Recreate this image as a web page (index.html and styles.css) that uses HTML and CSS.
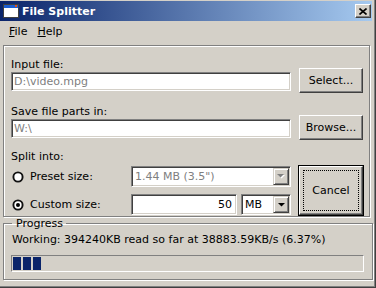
FILE: index.html
```html
<!DOCTYPE html>
<html lang="en">
<head>
    <meta charset="UTF-8">
    <title>File Splitter</title>
    <link rel="stylesheet" href="styles.css">
</head>
<body>
    <div class="window">
        <div class="titlebar">
            <svg class="app-icon" width="16" height="14" viewBox="0 0 16 14">
                <rect x="0.5" y="0.5" width="15" height="13" fill="#fff" stroke="#404040"/>
                <rect x="1" y="1" width="14" height="3" fill="#1c5ed0"/>
                <rect x="12" y="1" width="2" height="2" fill="#e05020"/>
            </svg>
            <span class="title">File Splitter</span>
            <div class="close">
                <svg width="8" height="7" viewBox="0 0 8 7">
                    <path d="M0.5 0.5 L7.5 6.5 M7.5 0.5 L0.5 6.5" stroke="#000" stroke-width="1.6"/>
                </svg>
            </div>
        </div>

        <div class="menubar">
            <span class="menu"><u>F</u>ile</span>
            <span class="menu"><u>H</u>elp</span>
        </div>

        <div class="panel">
            <div class="row">
                <label class="row-label">Input file:</label>
                <div class="edit disabled">D:\video.mpg</div>
                <div class="btn row-btn">Select...</div>
            </div>
            <div class="row second">
                <label class="row-label">Save file parts in:</label>
                <div class="edit disabled">W:\</div>
                <div class="btn row-btn">Browse...</div>
            </div>

            <div class="split-label">Split into:</div>
            <div class="split">
                <div class="radio">
                    <svg width="12" height="12" viewBox="0 0 12 12">
                        <circle cx="6" cy="6" r="4.6" fill="#fff" stroke="#111" stroke-width="1.9"/>
                    </svg>
                    <span>Preset size:</span>
                </div>
                <div class="combo disabled">
                    <span class="combo-text">1.44 MB (3.5")</span>
                    <span class="drop">
                        <svg width="8" height="5" viewBox="0 0 8 5">
                            <path d="M1 1 H8 L4.5 4.5 Z" fill="#fff"/>
                            <path d="M0 0 H7 L3.5 3.5 Z" fill="#808080"/>
                        </svg>
                    </span>
                </div>
                <div class="btn default">
                    <span class="focus">Cancel</span>
                </div>
                <div class="radio">
                    <svg width="12" height="12" viewBox="0 0 12 12">
                        <circle cx="6" cy="6" r="4.6" fill="#fff" stroke="#111" stroke-width="1.9"/>
                        <circle cx="6" cy="6" r="2" fill="#000"/>
                    </svg>
                    <span>Custom size:</span>
                </div>
                <div class="custom">
                    <div class="edit number">50</div>
                    <div class="combo unit">
                        <span class="combo-text">MB</span>
                        <span class="drop">
                            <svg width="7" height="4" viewBox="0 0 7 4">
                                <path d="M0 0 H7 L3.5 3.5 Z" fill="#000"/>
                            </svg>
                        </span>
                    </div>
                </div>
            </div>
        </div>

        <fieldset class="group">
            <legend>Progress</legend>
            <div class="status">Working: 394240KB read so far at 38883.59KB/s (6.37%)</div>
            <div class="progress">
                <span class="block"></span>
                <span class="block"></span>
                <span class="block"></span>
            </div>
        </fieldset>
    </div>
</body>
</html>
```

FILE: styles.css
```css
*,
*::after,
*::before{
    padding: 0;
    margin: 0;
    box-sizing: border-box;
}
html, body{
    background-color: #d4d0c8;
}
body{
    font: normal 11px/13px "DejaVu Sans", Tahoma, sans-serif;
    color: #000;
}

/* window frame */
.window{
    width: 376px;
    height: 288px;
    padding: 1px 3px 3px 0;
    border-right: 1px solid #404040;
    border-bottom: 1px solid #404040;
    box-shadow: inset -1px -1px #808080;
}
.titlebar{
    height: 20px;
    display: flex;
    align-items: center;
    padding: 0 1px 0 3px;
    background: linear-gradient(to right, #0a246a, #a6caf0);
}
.app-icon{
    display: block;
}
.title{
    margin-left: 3px;
    color: #fff;
    font-weight: bold;
}
.close{
    margin-left: auto;
    width: 16px;
    height: 14px;
    display: flex;
    align-items: center;
    justify-content: center;
    background-color: #d4d0c8;
    border: 1px solid;
    border-color: #fff #404040 #404040 #fff;
    box-shadow: inset -1px -1px #808080;
}
.close svg{
    display: block;
}

.menubar{
    height: 20px;
    display: flex;
    padding-left: 4px;
    line-height: 21px;
}
.menu{
    padding: 0 5px;
}

/* etched frames */
.panel{
    width: 367px;
    height: 172px;
    margin: 4px 0 0 3px;
    padding: 12px 0 0 7px;
    border: 1px solid #808080;
    box-shadow: inset 1px 1px #fff, 1px 1px #fff;
}
.row{
    display: grid;
    grid-template-columns: 280px 64px;
    column-gap: 8px;
}
.row.second{
    margin-top: 12px;
}
.row-label{
    grid-column: 1;
    grid-row: 1;
    margin-bottom: 1px;
}
.row .edit{
    grid-column: 1;
    grid-row: 2;
    margin-bottom: 2px;
}
.row-btn{
    grid-column: 2;
    grid-row: 1 / 3;
    align-self: end;
    height: 25px;
}

.edit{
    height: 19px;
    padding: 0 3px 0 2px;
    line-height: 17px;
    background-color: #fff;
    border: 1px solid;
    border-color: #808080 #fff #fff #808080;
    box-shadow: inset 1px 1px #404040, inset -1px -1px #d4d0c8;
    white-space: nowrap;
    overflow: hidden;
}
.disabled{
    color: #808080;
}
.edit.number{
    width: 106px;
    height: 21px;
    line-height: 19px;
    text-align: right;
    padding-right: 4px;
}

.btn{
    display: flex;
    align-items: center;
    justify-content: center;
    background-color: #d4d0c8;
    border: 1px solid;
    border-color: #fff #404040 #404040 #fff;
    box-shadow: inset -1px -1px #808080;
}
.btn.default{
    grid-column: 3;
    grid-row: 1 / 3;
    margin-left: 8px;
    padding: 3px;
    outline: 1px solid #000;
}
.focus{
    flex: 1;
    align-self: stretch;
    display: flex;
    align-items: center;
    justify-content: center;
    border: 1px dotted #000;
}

.split-label{
    margin-top: 10px;
}
.split{
    margin-top: 3px;
    display: grid;
    grid-template-columns: 120px 160px 72px;
    grid-template-rows: 21px 21px;
    row-gap: 7px;
}
.radio{
    display: flex;
    align-items: center;
    padding-left: 1px;
    gap: 6px;
}
.radio svg{
    display: block;
}

.combo{
    display: flex;
    height: 21px;
    padding: 1px;
    background-color: #fff;
    border: 1px solid;
    border-color: #808080 #fff #fff #808080;
    box-shadow: inset 1px 1px #404040, inset -1px -1px #d4d0c8;
}
.combo-text{
    flex: 1;
    padding-left: 2px;
    line-height: 17px;
    white-space: nowrap;
    overflow: hidden;
}
.drop{
    width: 16px;
    height: 17px;
    display: flex;
    align-items: center;
    justify-content: center;
    background-color: #d4d0c8;
    border: 1px solid;
    border-color: #d4d0c8 #404040 #404040 #d4d0c8;
    box-shadow: inset 1px 1px #fff, inset -1px -1px #808080;
}
.drop svg{
    display: block;
}
.custom{
    display: flex;
    gap: 4px;
}
.combo.unit{
    width: 50px;
}

/* progress group */
.group{
    width: 367px;
    height: 63px;
    margin-left: 3px;
    padding: 0 8px;
    border: 1px solid #808080;
    box-shadow: inset 1px 1px #fff, 1px 1px #fff;
}
.group legend{
    padding: 0 3px 0 4px;
    line-height: 13px;
}
.status{
    margin-top: 3px;
    white-space: nowrap;
}
.progress{
    width: 353px;
    height: 17px;
    margin: 9px 0 0 -1px;
    padding: 1px;
    display: flex;
    gap: 2px;
    border: 1px solid;
    border-color: #808080 #fff #fff #808080;
}
.block{
    width: 8px;
    height: 13px;
    background-color: #0a246a;
}
```
